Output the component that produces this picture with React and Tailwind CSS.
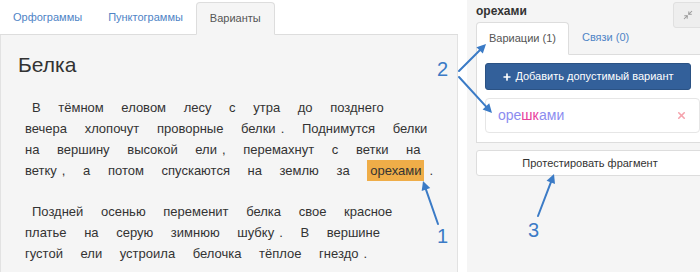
import { Plus, X, Minimize2 } from 'lucide-react'

const BLUE = '#3b7bc6'

function Arrow({ x1, y1, x2, y2 }) {
  const dx = x2 - x1
  const dy = y2 - y1
  const len = Math.hypot(dx, dy)
  const ux = dx / len
  const uy = dy / len
  const bx = x2 - ux * 9
  const by = y2 - uy * 9
  const pts = `${x2},${y2} ${bx - uy * 4.5},${by + ux * 4.5} ${bx + uy * 4.5},${by - ux * 4.5}`
  return (
    <g>
      <line x1={x1} y1={y1} x2={bx + ux * 2} y2={by + uy * 2} stroke={BLUE} strokeWidth="2" strokeLinecap="round" />
      <polygon points={pts} fill={BLUE} />
    </g>
  )
}

function P({ children }) {
  return <span className="ml-[5px]">{children}</span>
}

function Annotations() {
  return (
    <div className="pointer-events-none absolute inset-0">
      <svg width="700" height="272" className="absolute left-0 top-0">
        <Arrow x1={438} y1={224} x2={423} y2={181} />
        <Arrow x1={459} y1={71} x2={486} y2={44} />
        <Arrow x1={459} y1={77} x2={492} y2={113} />
        <Arrow x1={538} y1={216} x2={554} y2={174} />
      </svg>
      <span className="absolute left-[437px] top-[59px] text-[20px] leading-none text-[#3b7bc6]">2</span>
      <span className="absolute left-[437px] top-[226px] text-[20px] leading-none text-[#3b7bc6]">1</span>
      <span className="absolute left-[528px] top-[220px] text-[20px] leading-none text-[#3b7bc6]">3</span>
    </div>
  )
}

export default function App() {
  return (
    <div className="relative w-[700px] h-[272px] overflow-hidden bg-white font-['Liberation_Sans',Arial,sans-serif] text-[#333]">
      <div className="flex h-full">
        {/* left: text panel */}
        <div className="w-[458px] shrink-0 flex flex-col">
          <div className="h-[35px] flex items-end border-b border-[#ddd] text-[11px]">
            <div className="h-[33px] px-[13px] flex items-center text-[#4f84c6]">Орфограммы</div>
            <div className="h-[33px] px-[13px] flex items-center text-[#4f84c6]">Пунктограммы</div>
            <div className="h-[33px] px-[13px] -mb-px flex items-center bg-[#f5f5f5] border border-[#ddd] border-b-[#f5f5f5] rounded-t-[4px] text-[#555]">
              Варианты
            </div>
          </div>
          <div className="flex-1 bg-[#f5f5f5] border-x border-[#e2e2e2] pt-[18px] pl-[17px]">
            <h1 className="text-[21px] leading-[24px] text-[#333]">Белка</h1>
            <div className="mt-[20px] pl-[7px] text-[13px] leading-[21px] whitespace-nowrap [word-spacing:14px]">
              <div className="pl-[7px]">В тёмном еловом лесу с утра до позднего</div>
              <div>вечера хлопочут проворные белки<P>.</P> Поднимутся белки</div>
              <div>на вершину высокой ели<P>,</P> перемахнут с ветки на</div>
              <div>
                ветку<P>,</P> а потом спускаются на землю за{' '}
                <span className="bg-[#efad48] px-[3px] py-[3px] [word-spacing:0]">орехами</span>
                <P>.</P>
              </div>
              <div className="mt-[20px] pl-[7px]">Поздней осенью переменит белка свое красное</div>
              <div>платье на серую зимнюю шубку<P>.</P> В вершине</div>
              <div>густой ели устроила белочка тёплое гнездо<P>.</P></div>
            </div>
          </div>
        </div>

        {/* right: sidebar */}
        <div className="relative w-[242px] shrink-0 ml-[9px] bg-[#f5f5f5] pl-[9px]">
          <div className="h-[22px] flex items-center text-[12px] font-bold text-[#333]">орехами</div>
          <div className="absolute left-[206px] top-[2px] w-[32px] h-[26px] bg-[#eeeeee] border border-[#e0e0e0] rounded-[3px] flex items-center pl-[9px]">
            <Minimize2 size={10} strokeWidth={2.5} className="text-[#9a9a9a]" />
          </div>

          <div className="h-[33px] flex items-end border-b border-[#ddd] text-[11px]">
            <div className="h-[33px] px-[12px] -mb-px flex items-center bg-white border border-[#ddd] border-b-white rounded-t-[4px] text-[#555]">
              Вариации (1)
            </div>
            <div className="h-[33px] px-[13px] flex items-center text-[#4f84c6]">Связи (0)</div>
          </div>
          <div className="bg-white border-x border-b border-[#ddd] px-[8px] pt-[8px] pb-[9px]">
            <div className="w-[206px] h-[27px] flex items-center justify-center gap-[3px] bg-[#33609a] border border-[#2b5284] rounded-[3px] text-[11px] text-white">
              <Plus size={10} strokeWidth={4} />
              <span>Добавить допустимый вариант</span>
            </div>
            <div className="mt-[8px] h-[35px] flex items-center justify-between bg-white border border-[#e6e6e6] rounded-[4px] pl-[12px] pr-[12px]">
              <span className="text-[14px]">
                <span className="text-[#8c8cf0]">оре</span>
                <span className="text-[#e8409c]">шк</span>
                <span className="text-[#8c8cf0]">ами</span>
              </span>
              <X size={11} strokeWidth={3.5} className="text-[#f5a3ad]" />
            </div>
          </div>

          <div className="mt-[7px] w-[228px] h-[26px] flex items-center justify-center bg-white border border-[#ddd] rounded-[3px] text-[11px] text-[#333]">
            Протестировать фрагмент
          </div>
        </div>
      </div>

      <Annotations />
    </div>
  )
}
